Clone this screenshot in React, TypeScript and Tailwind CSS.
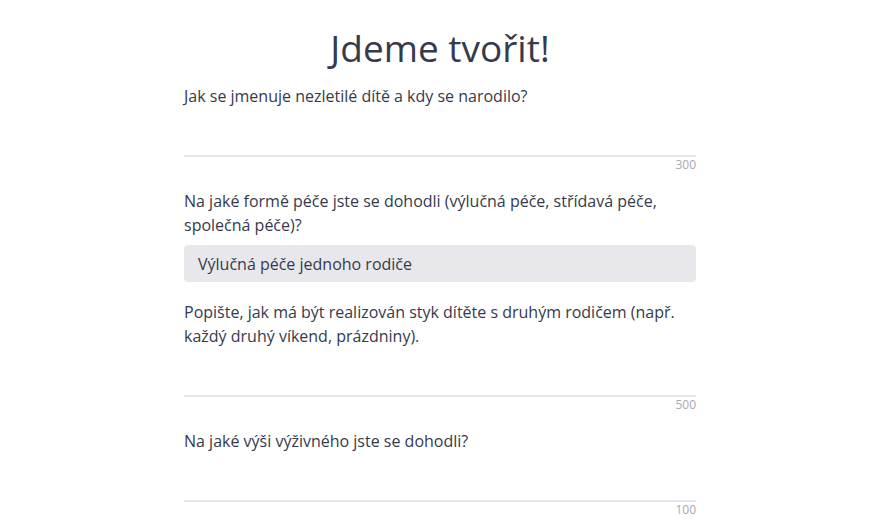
function Counter({ max }: { max: number }) {
  return <div className="text-right text-[12px] leading-4 text-[#a9a9b0]">{max}</div>;
}

function TextField({ label, max }: { label: string; max: number }) {
  return (
    <div>
      <label className="block">{label}</label>
      <textarea className="block w-full h-[49px] resize-none border-b-2 border-[#e6e6eb] bg-transparent outline-none" />
      <Counter max={max} />
    </div>
  );
}

export default function App() {
  return (
    <div className="min-h-[528px] bg-white font-['Open_Sans',sans-serif] text-[16px] leading-6 text-[#363a4c]">
      <div className="w-[512px] ml-[184px] pt-6">
        <h1 className="text-center text-[37px] leading-[48px] mb-3">Jdeme tvořit!</h1>
        <div className="flex flex-col">
          <TextField label="Jak se jmenuje nezletilé dítě a kdy se narodilo?" max={300} />
          <div className="mt-4">
            <label className="block">
              Na jaké formě péče jste se dohodli (výlučná péče, střídavá péče, společná péče)?
            </label>
            <div className="mt-2 h-[37px] rounded bg-[#e8e8ec] pl-[14px] flex items-center">
              Výlučná péče jednoho rodiče
            </div>
          </div>
          <div className="mt-[18px]">
            <TextField
              label="Popište, jak má být realizován styk dítěte s druhým rodičem (např. každý druhý víkend, prázdniny)."
              max={500}
            />
          </div>
          <div className="mt-4">
            <TextField label="Na jaké výši výživného jste se dohodli?" max={100} />
          </div>
        </div>
      </div>
    </div>
  );
}
